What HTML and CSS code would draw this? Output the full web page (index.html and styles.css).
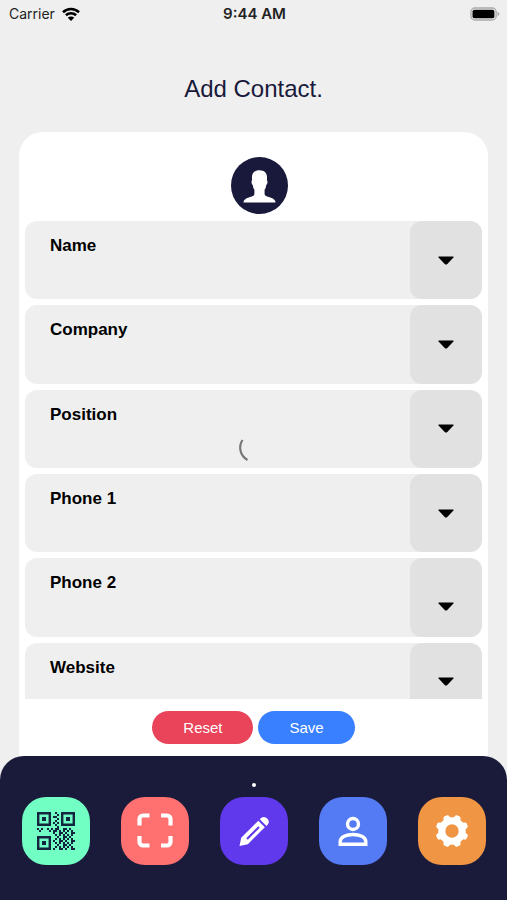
FILE: index.html
```html
<!DOCTYPE html>
<html lang="en">
<head>
<meta charset="utf-8">
<meta name="viewport" content="width=device-width, initial-scale=1">
<title>Add Contact</title>
<link rel="stylesheet" href="styles.css">
</head>
<body>
<div class="app">
  <header class="status">
    <div class="status-left">
      <span>Carrier</span>
      <svg class="wifi" viewBox="0 0 18 14" aria-hidden="true">
        <path d="M1 5.2a11.6 11.6 0 0 1 16 0M3.9 8.3a7.4 7.4 0 0 1 10.2 0" fill="none" stroke="#000" stroke-width="2.6"/>
        <path d="M9 14L5.8 10.7a4.6 4.6 0 0 1 6.4 0z"/>
      </svg>
    </div>
    <span class="status-time">9:44 AM</span>
    <div class="status-right">
      <svg class="battery" viewBox="0 0 31 14" aria-hidden="true">
        <rect x="1" y=".8" width="26" height="12.4" rx="4" fill="none" stroke="#aaa" stroke-width="1.4"/>
        <rect x="2.6" y="2.5" width="22.6" height="9" rx="2" fill="#000"/>
        <path d="M28.4 4.8q2 .8 2 2.2t-2 2.2z" fill="#aaa"/>
      </svg>
    </div>
  </header>

  <h1 class="title">Add Contact.</h1>

  <main class="card">
    <div class="avatar">
      <svg viewBox="0 0 56 56" aria-hidden="true">
        <circle cx="28" cy="28" r="28" fill="#19193b"/>
        <path d="M28 13c5 0 7.600 3 7.400 7.400l-.1 2.800c1 .4.6 3.400-.7 4.200-.3 2.400-.8 3.700-1.600 4.600v4.200c0 2.200 2.600 2.800 5.400 3.600 3.400 1 5.200 2.400 5.400 5H12.200c.2-2.600 2-4 5.400-5 2.800-.8 5.400-1.400 5.400-3.600V32c-.8-.9-1.300-2.200-1.600-4.600-1.300-.8-1.700-3.800-.7-4.200l-.1-2.800C20.400 16 23 13 28 13z" fill="#fff"/>
      </svg>
    </div>

    <form class="form">
      <div class="list">
        <div class="fields">
          <div class="field">
            <div class="field-main"><label for="name">Name</label><input id="name" type="text"></div>
            <button class="toggle" type="button" aria-label="Name options"><svg viewBox="0 0 16 9"><path d="M1 .5h14q1 0 .4 1L9.300 7.900q-1.300 1.100-2.600 0L.6 1.500Q0 .5 1 .5z"/></svg></button>
          </div>
          <div class="field">
            <div class="field-main"><label for="company">Company</label><input id="company" type="text"></div>
            <button class="toggle" type="button" aria-label="Company options"><svg viewBox="0 0 16 9"><path d="M1 .5h14q1 0 .4 1L9.300 7.900q-1.300 1.100-2.600 0L.6 1.500Q0 .5 1 .5z"/></svg></button>
          </div>
          <div class="field">
            <div class="field-main"><label for="position">Position</label><input id="position" type="text"></div>
            <button class="toggle" type="button" aria-label="Position options"><svg viewBox="0 0 16 9"><path d="M1 .5h14q1 0 .4 1L9.300 7.900q-1.300 1.100-2.600 0L.6 1.500Q0 .5 1 .5z"/></svg></button>
            <svg class="spinner" viewBox="0 0 12 24" aria-hidden="true"><path d="M4.500 2C.5 8 1.500 17.500 9.500 22" fill="none" stroke="#777" stroke-width="2.200"/></svg>
          </div>
          <div class="field">
            <div class="field-main"><label for="phone1">Phone 1</label><input id="phone1" type="tel"></div>
            <button class="toggle" type="button" aria-label="Phone 1 options"><svg viewBox="0 0 16 9"><path d="M1 .5h14q1 0 .4 1L9.300 7.900q-1.300 1.100-2.600 0L.6 1.500Q0 .5 1 .5z"/></svg></button>
          </div>
          <div class="field">
            <div class="field-main"><label for="phone2">Phone 2</label><input id="phone2" type="tel"></div>
            <button class="toggle toggle-low" type="button" aria-label="Phone 2 options"><svg viewBox="0 0 16 9"><path d="M1 .5h14q1 0 .4 1L9.300 7.900q-1.300 1.100-2.600 0L.6 1.500Q0 .5 1 .5z"/></svg></button>
          </div>
          <div class="field">
            <div class="field-main"><label for="website">Website</label><input id="website" type="url"></div>
            <button class="toggle" type="button" aria-label="Website options"><svg viewBox="0 0 16 9"><path d="M1 .5h14q1 0 .4 1L9.300 7.900q-1.300 1.100-2.600 0L.6 1.500Q0 .5 1 .5z"/></svg></button>
          </div>
        </div>
      </div>
      <div class="actions">
        <button class="btn reset" type="reset">Reset</button>
        <button class="btn save" type="submit">Save</button>
      </div>
    </form>
  </main>

  <nav class="nav" aria-label="Main">
    <span class="dot"></span>
    <div class="tiles">
      <a class="tile mint" href="#code" aria-label="My code">
        <svg class="qr" viewBox="0 0 38 38" aria-hidden="true">
          <g fill="none" stroke="#14263d" stroke-width="2.400"><path d="M1.200 1.200h11.600v11.600H1.200zM25.200 1.200h11.600v11.600H25.200zM1.200 25.200h11.600v11.600H1.200z"/></g>
          <g fill="#14263d"><path d="M5 5h4v4H5zM29 5h4v4h-4zM5 29h4v4H5z"/>
          <path d="M18 0h2v2h-2zM20 2h2v2h-2zM16 4h4v2h-4zM20 6h2v2h-2zM18 8h2v2h-2zM16 10h2v2h-2zM20 10h2v2h-2zM18 12h2v2h-2zM20 14h2v2h-2zM0 16h2v2H0zM4 16h2v2H4zM2 18h2v2H2zM10 16h2v2h-2zM14 16h2v2h-2zM12 18h2v2h-2zM16 18h2v2h-2zM18 16h2v2h-2z"/></g>
          <g fill="none" stroke="#14263d" stroke-width="2">
            <path d="M20 17H38M20 25H38M20 33H38" stroke-dasharray="2 4 4 2"/>
            <path d="M18 19H38M18 23H38M18 27H38M18 31H38M18 35H38" stroke-dasharray="2 2"/>
            <path d="M16 21H38M16 29H38M16 37H38" stroke-dasharray="2 4 4 2"/>
          </g>
        </svg>
      </a>
      <a class="tile coral" href="#scan" aria-label="Scan">
        <svg viewBox="0 0 36 36" aria-hidden="true"><path d="M2.500 12.500V6a3.500 3.500 0 0 1 3.500-3.500h6.500M24 2.500h6A3.500 3.500 0 0 1 33.500 6v6.500M33.500 23v6a3.500 3.500 0 0 1-3.500 3.500h-6M12.500 32.500H6A3.500 3.500 0 0 1 2.500 29v-6" fill="none" stroke="#fff" stroke-width="4.200"/></svg>
      </a>
      <a class="tile violet" href="#edit" aria-label="Edit">
        <svg viewBox="0 0 36 36" aria-hidden="true"><path fill="#fff" d="M23.800 6.200l1.200-1.200q3.300-2.400 6.200.4t.6 6.200l-1.400 1.400z"/><path fill="#fff" d="M22.300 7.700l6.500 6.500L11.800 31.200 3.500 33l1.700-8.300z"/><path d="M11 26L23 14" stroke="#6139ed" stroke-width="2.200"/></svg>
      </a>
      <a class="tile blue" href="#profile" aria-label="Profile">
        <svg viewBox="0 0 36 36" aria-hidden="true"><g fill="none" stroke="#fff" stroke-width="3.400"><circle cx="18" cy="11" r="5.500"/><path d="M5.200 31.200v-2.700C5.200 24 11.500 21.500 18 21.500s12.800 2.500 12.800 7v2.700z"/></g></svg>
      </a>
      <a class="tile orange" href="#settings" aria-label="Settings">
        <svg viewBox="-18 -18 36 36" aria-hidden="true">
          <circle r="10.200" fill="none" stroke="#fff" stroke-width="7"/>
          <g fill="#fff">
            <path id="tooth" transform="rotate(22.500)" d="M-4-12l1-3q.4-1.400 1.500-1.400h3q1.100 0 1.500 1.400l1 3z"/>
            <use href="#tooth" transform="rotate(45)"/>
            <use href="#tooth" transform="rotate(90)"/>
            <use href="#tooth" transform="rotate(135)"/>
            <use href="#tooth" transform="rotate(180)"/>
            <use href="#tooth" transform="rotate(225)"/>
            <use href="#tooth" transform="rotate(270)"/>
            <use href="#tooth" transform="rotate(315)"/>
          </g>
        </svg>
      </a>
    </div>
  </nav>
</div>
</body>
</html>
```
FILE: styles.css
```css
* { box-sizing: border-box; }

body {
  margin: 0;
  background: #efefef;
  color: #000;
  font-family: "Liberation Sans", Arial, sans-serif;
}

.app {
  display: flex;
  flex-direction: column;
  height: 100vh;
}

.status {
  display: grid;
  grid-template-columns: 1fr auto 1fr;
  align-items: center;
  height: 28px;
  padding: 0 7px 0 9px;
  font: 14px/20px Inter, sans-serif;
  color: #222;
}
.status-left { display: flex; align-items: center; gap: 7px; }
.status-time { font-size: 15px; font-weight: 600; }
.status-right { display: flex; justify-content: flex-end; }
.wifi { width: 18px; height: 14px; }
.battery { width: 30px; height: 14px; }

.title {
  margin: 46px 0 28px;
  font-size: 24px;
  line-height: 30px;
  font-weight: 400;
  text-align: center;
  color: #19193b;
}

.card {
  flex: 1;
  min-height: 0;
  display: flex;
  flex-direction: column;
  margin: 0 19px;
  padding: 25px 6px 36px;
  border-radius: 24px 24px 0 0;
  background: #fff;
}
.avatar {
  display: flex;
  justify-content: center;
  padding: 0 0 7px 12px;
}
.avatar svg { width: 57px; height: 57px; }

.form { flex: 1; min-height: 0; display: flex; flex-direction: column; }
.list { flex: 1; min-height: 0; overflow: hidden; }
.fields {
  display: grid;
  grid-template-rows: repeat(6, 1fr);
  gap: 6px;
  height: 500px;
}
.field {
  position: relative;
  display: flex;
  border-radius: 12px;
  background: #efefef;
}
.field-main { flex: 1; padding: 14px 25px 0; }
.field-main label {
  display: block;
  font-size: 17px;
  line-height: 22px;
  font-weight: 700;
}
.field-main input {
  width: 100%;
  height: 30px;
  padding: 0;
  border: 0;
  outline: 0;
  background: transparent;
  font: inherit;
}
.toggle {
  display: flex;
  align-items: center;
  justify-content: center;
  width: 72px;
  padding: 0;
  border: 0;
  border-radius: 12px;
  background: #e1e1e1;
}
.toggle svg { width: 16px; height: 9px; }
.toggle-low { padding-top: 18px; }
.spinner {
  position: absolute;
  left: 213px;
  bottom: 6px;
  width: 12px;
  height: 24px;
}

.actions {
  display: flex;
  justify-content: center;
  gap: 5px;
  padding-top: 12px;
}
.btn {
  height: 33px;
  padding: 0 31px;
  border: 0;
  border-radius: 17px;
  color: #fff;
  font: 15px/20px "Liberation Sans", Arial, sans-serif;
}
.reset { background: #e9445a; }
.save { background: #3880ff; }

.nav {
  position: relative;
  display: flex;
  flex-direction: column;
  align-items: center;
  height: 144px;
  margin-top: -24px;
  padding: 27px 21px 0 22px;
  border-radius: 24px 24px 0 0;
  background: #1a1b3a;
}
.dot { width: 4px; height: 4px; border-radius: 50%; background: #fff; }
.tiles {
  align-self: stretch;
  display: flex;
  justify-content: space-between;
  margin-top: 10px;
}
.tile {
  display: flex;
  align-items: center;
  justify-content: center;
  width: 68px;
  height: 68px;
  border-radius: 24px;
}
.tile svg { width: 36px; height: 36px; }
.tile .qr { width: 38px; height: 38px; }
.mint { background: #72ffc4; }
.coral { background: #ff7070; }
.violet { background: #6139ed; }
.blue { background: #557bf4; }
.orange { background: #ef9543; }
```
